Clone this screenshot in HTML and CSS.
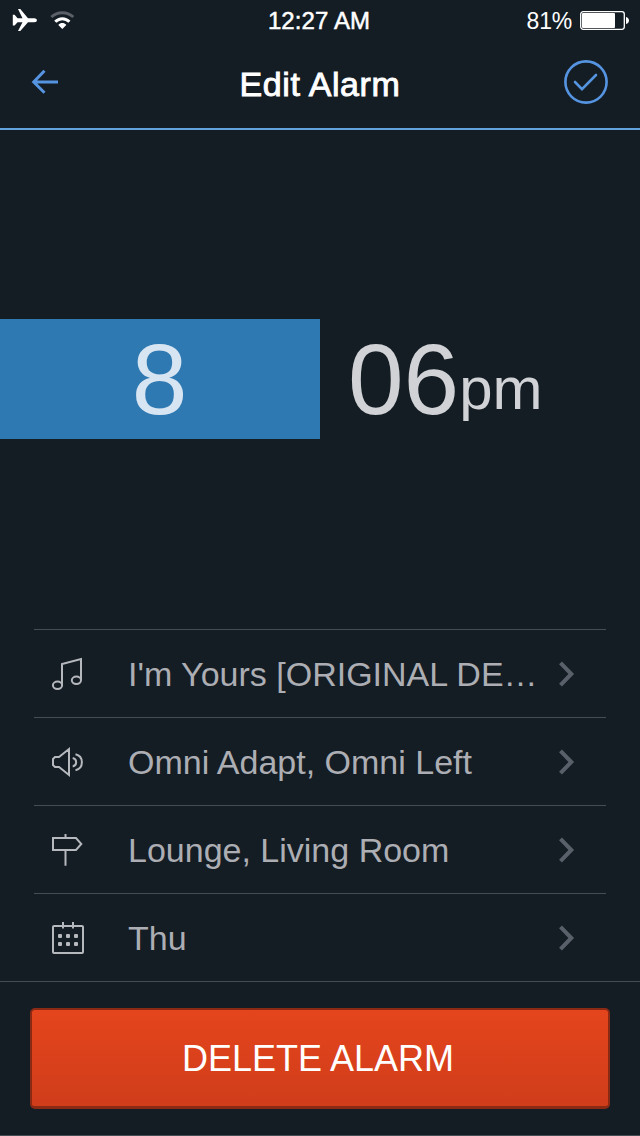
FILE: index.html
```html
<!DOCTYPE html>
<html lang="en">
<head>
<meta charset="utf-8">
<title>Edit Alarm</title>
<link rel="stylesheet" href="styles.css">
</head>
<body>
<div class="status">
  <div class="status-left">
    <svg width="80" height="40" viewBox="0 0 80 40" fill="#fff">
      <path d="M12.800 14.800h1.800l3 3.500h4.900L18 9h2.300l7.700 9.300h6.300c3.500 0 3.500 4 0 4H28L20.300 31H18l4.500-8.700h-4.900l-3 3.200h-1.800z"/>
      <path d="M62.300 29l-4-4c2.200-2.600 5.800-2.600 8 0z"/>
      <path d="M55.300 21.800c4-4.100 10.100-4.100 14.100 0" fill="none" stroke="#fff" stroke-width="3"/>
      <path d="M51.300 17c6-5.700 16-5.700 22 0" fill="none" stroke="#5b6067" stroke-width="2.900"/>
    </svg>
  </div>
  <div class="status-time">12:27 AM</div>
  <div class="status-right">
    <span class="percent">81%</span>
    <svg width="50" height="20" viewBox="0 0 50 20" fill="#fff">
      <rect x=".7" y="1.700" width="43.600" height="17.600" rx="2.500" fill="none" stroke="#fff" stroke-width="1.300"/>
      <rect x="2" y="3" width="33" height="15" rx="1"/>
      <path d="M46 7c4 1 4 6 0 7z"/>
    </svg>
  </div>
</div>
<header class="header">
  <svg class="back" width="28" height="26" viewBox="0 0 28 26" fill="none" stroke="#5594e0" stroke-width="3"><path d="M27 13H3M13.500 1.700L2.700 13l10.800 10.700"/></svg>
  <h1 class="title">Edit Alarm</h1>
  <svg class="confirm" width="44" height="44" viewBox="0 0 44 44" fill="none" stroke="#5594e0" stroke-width="2.600" stroke-linecap="round"><circle cx="22" cy="22" r="20.600"/><path d="M11 22l7 7.200L32 15"/></svg>
</header>
<main class="picker">
  <div class="hour">8</div>
  <div class="minute">06<span class="period">pm</span></div>
</main>
<section class="options">
  <div class="row">
    <svg class="icon" width="36" height="36" viewBox="0 0 36 36"><path d="M12 29V8l19-5v21"/><ellipse cx="7.500" cy="29.300" rx="4.600" ry="3.700"/><ellipse cx="26.400" cy="24.300" rx="4.600" ry="3.700"/></svg>
    <span class="label">I'm Yours [ORIGINAL DE…</span>
    <svg class="chevron" width="18" height="28" viewBox="0 0 18 28"><path d="M2.500 2.800L13.300 14 2.500 25.200"/></svg>
  </div>
  <div class="row">
    <svg class="icon" width="36" height="36" viewBox="0 0 36 36"><path d="M5 13h4L19 5v26L9 23H5L3 21v-6zM22.700 14c4.600 1 4.600 7.500 0 8.500M25.500 10.200c8.500 2 8.500 14 0 16"/></svg>
    <span class="label">Omni Adapt, Omni Left</span>
    <svg class="chevron" width="18" height="28" viewBox="0 0 18 28"><path d="M2.500 2.800L13.300 14 2.500 25.200"/></svg>
  </div>
  <div class="row">
    <svg class="icon" width="36" height="36" viewBox="0 0 36 36"><path d="M3 6h23l5.300 6-5.300 6H3zM15.500 2v4M15.500 18v15.700"/></svg>
    <span class="label">Lounge, Living Room</span>
    <svg class="chevron" width="18" height="28" viewBox="0 0 18 28"><path d="M2.500 2.800L13.300 14 2.500 25.200"/></svg>
  </div>
  <div class="row">
    <svg class="icon" width="36" height="36" viewBox="0 0 36 36"><rect x="3" y="6" width="30" height="27" rx="1"/><path d="M13 2v6.500M23 2v6.500"/><g class="days"><rect x="8" y="14" width="4" height="4" rx="1"/><rect x="16" y="14" width="4" height="4" rx="1"/><rect x="24" y="14" width="4" height="4" rx="1"/><rect x="8" y="22" width="4" height="4" rx="1"/><rect x="16" y="22" width="4" height="4" rx="1"/><rect x="24" y="22" width="4" height="4" rx="1"/></g></svg>
    <span class="label">Thu</span>
    <svg class="chevron" width="18" height="28" viewBox="0 0 18 28"><path d="M2.500 2.800L13.300 14 2.500 25.200"/></svg>
  </div>
</section>
<footer class="footer"><button class="delete">DELETE ALARM</button></footer>
</body>
</html>
```
FILE: styles.css
```css
* { box-sizing: border-box; }
body {
  margin: 0;
  width: 640px;
  height: 1136px;
  overflow: hidden;
  display: flex;
  flex-direction: column;
  background: #141c24;
  color: #fff;
  font-family: "Liberation Sans", Arial, sans-serif;
}
svg { display: block; flex: none; }
.status {
  height: 40px;
  display: grid;
  grid-template-columns: 1fr auto 1fr;
  font-size: 24px;
  line-height: 42px;
}
.status-time { padding-right: 2px; letter-spacing: .1px; -webkit-text-stroke: .5px #fff; }
.status-right {
  display: flex;
  justify-content: flex-end;
  padding-right: 10px;
}
.status-right svg { margin: 10px 0 0 8px; }
.percent { font-size: 23px; letter-spacing: -.2px; }
.header {
  height: 90px;
  display: grid;
  grid-template-columns: 1fr auto 1fr;
  border-bottom: 2px solid #62a3dd;
}
.back { margin: 29px 0 0 31px; }
.title {
  margin: 0;
  font-size: 34px;
  font-weight: 400;
  line-height: 88px;
  letter-spacing: .6px;
  -webkit-text-stroke: .9px #fff;
}
.confirm { margin: 20px 32px 0 0; justify-self: end; }
.picker {
  height: 309px;
  margin-top: 189px;
  display: flex;
  font-size: 100px;
  line-height: 120px;
}
.hour {
  width: 320px;
  height: 120px;
  padding-right: 1px;
  background: #2f79b2;
  color: #d7e5f2;
  text-align: center;
}
.minute { height: 120px; padding-left: 28px; color: #d0d2d5; display: flex; }
.period { font-size: 60px; line-height: 140px; }
.options { height: 353px; margin-top: 1px; flex: none; border-bottom: 1px solid #454c54; }
.row {
  height: 88px;
  margin: 0 34px;
  padding: 0 31px 0 16px;
  border-top: 1px solid #454c54;
  display: flex;
  align-items: center;
}
.icon { fill: none; stroke: #b5b8bd; stroke-width: 2; }
.days rect { fill: #b5b8bd; stroke: none; }
.label {
  flex: 1;
  margin-left: 42px;
  white-space: nowrap;
  font-size: 34px;
  line-height: 86px;
  color: #acaeb3;
}
.chevron { fill: none; stroke: #596069; stroke-width: 4; margin-right: -1px; }
.footer {
  height: 154px;
  padding: 26px 30px 27px;
  border-bottom: 1px solid #454c54;
}
.delete {
  width: 580px;
  height: 101px;
  padding: 1px 4px 0 0;
  border: 2px solid #8b2a14;
  border-bottom-width: 3px;
  border-radius: 5px;
  background: linear-gradient(#e4451d, #d03d1a);
  color: #fff;
  font: 36px/96px "Liberation Sans", Arial, sans-serif;
}
```
